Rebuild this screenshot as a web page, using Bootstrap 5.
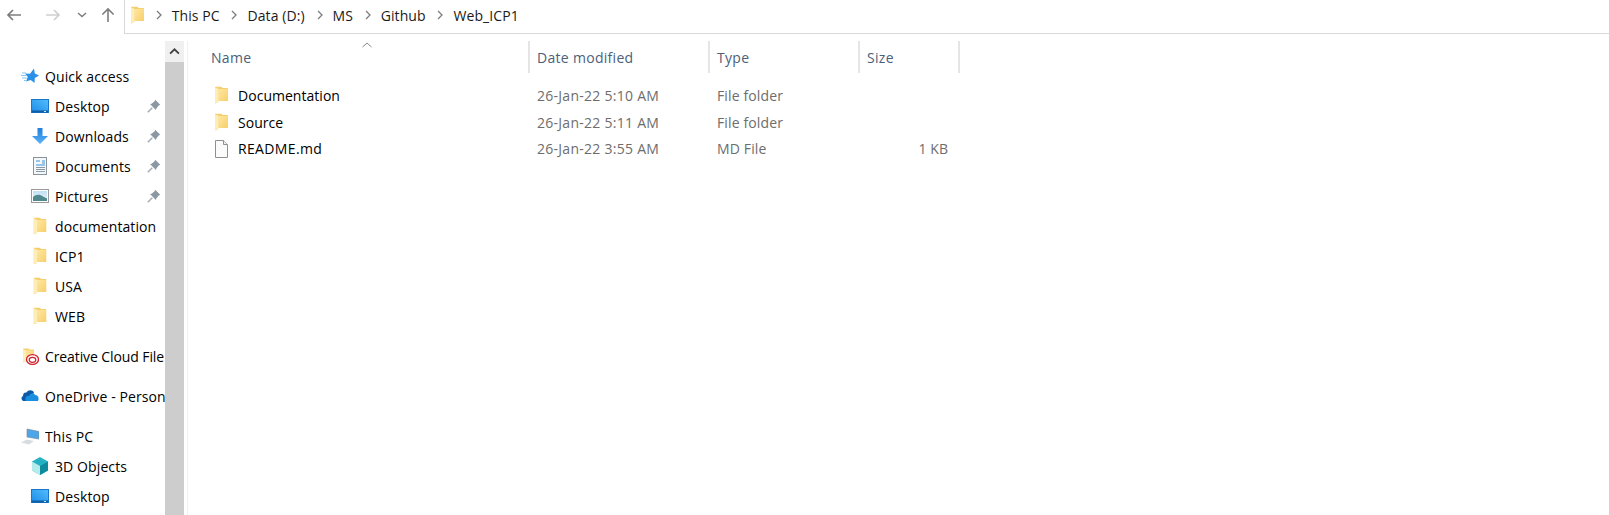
<!DOCTYPE html>
<html lang="en">
<head>
<meta charset="utf-8">
<title>Web_ICP1</title>
<link href="https://cdn.jsdelivr.net/npm/bootstrap@5.3.0/dist/css/bootstrap.min.css" rel="stylesheet">
<style>
html,body{height:515px;overflow:hidden;background:#fff}
body{font-family:"Open Sans","Noto Sans","Liberation Sans",sans-serif;font-size:14px;color:#000;letter-spacing:.03px}
.ex-top{height:34px}
.ex-nav{width:124px;padding-left:6px;padding-bottom:5px;flex:none}
.ex-addr{flex:1;height:34px;border-left:1px solid #d9d9d9;border-bottom:1px solid #d9d9d9;padding-left:6px;padding-bottom:3px;color:#1a1a1a;letter-spacing:.1px}
.ex-addr span{white-space:nowrap}
.ex-sep{margin:0 10px 0 11.7px;flex:none}
.ex-main{height:481px}
.ex-side{width:165px;flex:none;overflow:hidden;padding-top:27px}
.ex-row{height:30px;white-space:nowrap;overflow:hidden}
.ex-l1{padding-left:21px}
.ex-l2{padding-left:31px}
.ex-gap{height:10px}
.ex-ico{width:18px;height:18px;flex:none;margin-right:6px}
.ex-pin{margin-left:auto;margin-right:4px;flex:none}
.ex-label{overflow:hidden;letter-spacing:.1px}
.ex-tight{letter-spacing:-.1px}
.ex-bar{width:19px;background:#cdcdcd;flex:none;margin-top:7px}
.ex-btn{height:21px;background:#f0f0f0}
.ex-edge{width:1px;background:#f0f0f0;margin:7px 0 0 3px;flex:none}
.ex-list{flex:1;padding-left:15px;position:relative}
.ex-sort{position:absolute;left:174px;top:8px}
.ex-head{height:32px;margin-top:7px;color:#4c607a;margin-bottom:9px;letter-spacing:.3px}
.ex-head>div{height:32px;border-right:2px solid #e5e5e5;padding-left:7px;display:flex;align-items:center}
.ex-head>.c1{padding-left:8px}
.c1{width:327px;flex:none}
.c2{width:180px;flex:none}
.c3{width:150px;flex:none}
.c4{width:100px;flex:none}
.ex-file{height:26.7px;color:#6d6d6d}
.ex-file>div{padding-left:7px}
.ex-file>.c1{color:#000;padding-left:12px;display:flex;align-items:center}
.ex-file>.c2{letter-spacing:.27px}
.ex-file>.c3{letter-spacing:.13px}
.ex-file .ex-ico{margin-right:10px;width:13px;height:18px}
.ex-file .c4{text-align:right;padding-right:12px}
.ex-wide{letter-spacing:.35px}
</style>
</head>
<body>
<svg width="0" height="0" class="position-absolute">
<defs>
<linearGradient id="fg" x1="0" y1="0" x2="1" y2="1"><stop offset="0" stop-color="#ffe7a0"/><stop offset="1" stop-color="#f6cf6c"/></linearGradient>
<linearGradient id="dl" x1="0" y1="0" x2="0" y2="1"><stop offset="0" stop-color="#1f7fdc"/><stop offset="1" stop-color="#5ab2f6"/></linearGradient>
<linearGradient id="dk" x1="0" y1="1" x2="1" y2="0"><stop offset="0" stop-color="#1d8ce8"/><stop offset="1" stop-color="#53bdfb"/></linearGradient>
<linearGradient id="sky" x1="0" y1="0" x2="0" y2="1"><stop offset="0" stop-color="#bfe0f5"/><stop offset="1" stop-color="#eef6fb"/></linearGradient>
<symbol id="folder" viewBox="0 0 13 18"><path d="M0 .8H6.500L7.500 2H12.800V15H3V16.200L0 17.500Z" fill="#f5cf6e"/><path d="M3.500 3H12.800V15H3.500Z" fill="url(#fg)"/><path d="M0 1.200 3.500 3V15.800L0 17.500Z" fill="#fdeeb9"/></symbol>
<symbol id="pin" viewBox="0 0 14 14"><path d="M8.200 .8 13.200 5.800 11.700 6.400 9.300 9.400 9 11 3 5 4.600 4.700 7.600 2.300Z" fill="#8b97a3"/><path d="M5.300 8.700 .8 13.200" stroke="#a5adb5" stroke-width="1.500"/></symbol>
<symbol id="desk" viewBox="0 0 18 14"><rect x=".5" y=".5" width="17" height="13" fill="url(#dk)" stroke="#1976c9"/><rect x="1" y="11.500" width="16" height="2" fill="#0e5da8"/><rect x="13" y="12" width="2" height="1" fill="#cfe8fb"/></symbol>
<symbol id="chev" viewBox="0 0 6 10"><path d="M1 1l4 4-4 4" fill="none" stroke="#7d7d7d" stroke-width="1.300"/></symbol>
</defs>
</svg>
<div class="ex-top d-flex">
  <div class="ex-nav d-flex align-items-center">
    <svg width="16" height="16" viewBox="0 0 16 16"><path d="M15 8H2M7 3 2 8l5 5" fill="none" stroke="#7d7d7d" stroke-width="1.700"/></svg>
    <svg width="16" height="16" viewBox="0 0 16 16" style="margin-left:23px"><path d="M1 8h13M9 3l5 5-5 5" fill="none" stroke="#cfcfcf" stroke-width="1.700"/></svg>
    <svg width="10" height="6" viewBox="0 0 9 6" style="margin-left:16px"><path d="M.5 1 4.500 4.500 8.500 1" fill="none" stroke="#7d7d7d" stroke-width="1.500"/></svg>
    <svg width="14" height="16" viewBox="0 0 15 17" style="margin-left:14px"><path d="M7.500 16V2M1.500 8l6-6 6 6" fill="none" stroke="#7d7d7d" stroke-width="1.700"/></svg>
  </div>
  <div class="ex-addr d-flex align-items-center">
    <svg width="13" height="18"><use href="#folder"/></svg>
    <svg class="ex-sep" width="6" height="10"><use href="#chev"/></svg><span>This PC</span>
    <svg class="ex-sep" width="6" height="10"><use href="#chev"/></svg><span>Data (D:)</span>
    <svg class="ex-sep" width="6" height="10"><use href="#chev"/></svg><span>MS</span>
    <svg class="ex-sep" width="6" height="10"><use href="#chev"/></svg><span>Github</span>
    <svg class="ex-sep" width="6" height="10"><use href="#chev"/></svg><span>Web_ICP1</span>
  </div>
</div>
<div class="ex-main d-flex">
  <div class="ex-side">
    <div class="ex-row ex-l1 d-flex align-items-center"><svg class="ex-ico" viewBox="0 0 18 18"><path d="M13 1.500 13.800 6.500 18 8.500 13.800 11 13.500 16 9.700 13 5 14.500 6.800 10 4 6.500 9 6.800Z" fill="#2a8fe6"/><path d="M1 6h4M0 8.500h5M1 11h5M3 13.500h3" stroke="#86c6f4"/></svg><span class="ex-label">Quick access</span></div>
    <div class="ex-row ex-l2 d-flex align-items-center"><svg class="ex-ico" viewBox="0 0 18 14"><use href="#desk"/></svg><span class="ex-label">Desktop</span><svg class="ex-pin" width="14" height="14"><use href="#pin"/></svg></div>
    <div class="ex-row ex-l2 d-flex align-items-center"><svg class="ex-ico" viewBox="0 0 18 18"><path d="M6.500 1h5v8H17l-8 8-8-8h5.500Z" fill="url(#dl)"/></svg><span class="ex-label">Downloads</span><svg class="ex-pin" width="14" height="14"><use href="#pin"/></svg></div>
    <div class="ex-row ex-l2 d-flex align-items-center"><svg class="ex-ico" viewBox="0 0 18 18"><rect x="2.500" y=".5" width="13" height="17" fill="#f4f7fa" stroke="#8b949c"/><path d="M5 4h4M11 4h3M11 6h3M5 8h9" stroke="#3f93d8"/><path d="M5 10.500h9M5 12.500h9M5 14.500h9" stroke="#8a97a3"/></svg><span class="ex-label">Documents</span><svg class="ex-pin" width="14" height="14"><use href="#pin"/></svg></div>
    <div class="ex-row ex-l2 d-flex align-items-center"><svg class="ex-ico" viewBox="0 0 18 14"><rect x=".5" y=".5" width="17" height="13" fill="#fff" stroke="#9a9a9a"/><rect x="2" y="2" width="14" height="10" fill="url(#sky)"/><path d="M2 8C5 5 9 5 12 7.500L16 9.500V12H2Z" fill="#4f8a8f"/></svg><span class="ex-label">Pictures</span><svg class="ex-pin" width="14" height="14"><use href="#pin"/></svg></div>
    <div class="ex-row ex-l2 d-flex align-items-center"><svg class="ex-ico" viewBox="-2.500 0 18 18"><use href="#folder" width="13" height="18"/></svg><span class="ex-label">documentation</span></div>
    <div class="ex-row ex-l2 d-flex align-items-center"><svg class="ex-ico" viewBox="-2.500 0 18 18"><use href="#folder" width="13" height="18"/></svg><span class="ex-label">ICP1</span></div>
    <div class="ex-row ex-l2 d-flex align-items-center"><svg class="ex-ico" viewBox="-2.500 0 18 18"><use href="#folder" width="13" height="18"/></svg><span class="ex-label">USA</span></div>
    <div class="ex-row ex-l2 d-flex align-items-center"><svg class="ex-ico" viewBox="-2.500 0 18 18"><use href="#folder" width="13" height="18"/></svg><span class="ex-label">WEB</span></div>
    <div class="ex-gap"></div>
    <div class="ex-row ex-l1 d-flex align-items-center"><svg class="ex-ico" viewBox="0 0 18 18"><use href="#folder" x="2" width="11" height="17"/><ellipse cx="11.500" cy="12.500" rx="6" ry="4.800" fill="#fff" stroke="#d3202a" stroke-width="1.300"/><ellipse cx="11.500" cy="12.800" rx="3.300" ry="2.500" fill="none" stroke="#d3202a" stroke-width="1.200"/></svg><span class="ex-label ex-tight">Creative Cloud File</span></div>
    <div class="ex-gap"></div>
    <div class="ex-row ex-l1 d-flex align-items-center"><svg class="ex-ico" viewBox="0 0 18 18"><path d="M2 9C2 6 4 5 5.500 5.500 7 2.500 11.500 2.500 13 5.500L10 10 5 14H2.500C.5 14-.5 10 2 9Z" fill="#0a5aa8"/><path d="M5 14C3 11 6 8 8 9 9 6 13 5 14 8 17 8 18.500 10.500 17 14Z" fill="#1a8fe0"/></svg><span class="ex-label">OneDrive - Person</span></div>
    <div class="ex-gap"></div>
    <div class="ex-row ex-l1 d-flex align-items-center"><svg class="ex-ico" viewBox="0 0 18 18"><path d="M6 2l12 2.500v7.500L6 10Z" fill="#4ea6ea" stroke="#7d8c99" stroke-width=".7"/><path d="M0 15.500l6-3 7 1.500-5 3.500Z" fill="#d7dcdf"/></svg><span class="ex-label">This PC</span></div>
    <div class="ex-row ex-l2 d-flex align-items-center"><svg class="ex-ico" viewBox="0 0 18 18"><path d="M9 0l8 4.500v9L9 18l-8-4.500v-9Z" fill="#27b2c4"/><path d="M1 4.500l8 4.500v9l-8-4.500Z" fill="#b4ecec"/><path d="M9 9l8-4.500v9L9 18Z" fill="#0f8ba0"/></svg><span class="ex-label">3D Objects</span></div>
    <div class="ex-row ex-l2 d-flex align-items-center"><svg class="ex-ico" viewBox="0 0 18 14"><use href="#desk"/></svg><span class="ex-label">Desktop</span></div>
  </div>
  <div class="ex-bar d-flex flex-column">
    <div class="ex-btn d-flex align-items-center justify-content-center"><svg width="11" height="7" viewBox="0 0 10 6"><path d="M1 5l4-4 4 4" fill="none" stroke="#404040" stroke-width="1.600"/></svg></div>
  </div>
  <div class="ex-edge"></div>
  <div class="ex-list">
    <svg class="ex-sort" width="10" height="6" viewBox="0 0 10 6"><path d="M.5 5 5 1l4.500 4" fill="none" stroke="#8a8a8a"/></svg>
    <div class="ex-head d-flex">
      <div class="c1">Name</div><div class="c2">Date modified</div><div class="c3">Type</div><div class="c4">Size</div>
    </div>
    <div class="ex-file d-flex align-items-center"><div class="c1"><svg class="ex-ico"><use href="#folder"/></svg>Documentation</div><div class="c2">26-Jan-22 5:10 AM</div><div class="c3">File folder</div></div>
    <div class="ex-file d-flex align-items-center"><div class="c1"><svg class="ex-ico"><use href="#folder"/></svg>Source</div><div class="c2">26-Jan-22 5:11 AM</div><div class="c3">File folder</div></div>
    <div class="ex-file d-flex align-items-center"><div class="c1"><svg class="ex-ico" viewBox="0 0 13 18"><path d="M.5.5h8l4 4v13H.5Z" fill="#fbfbfb" stroke="#8f8f8f"/><path d="M8.500.5v4h4" fill="#eee" stroke="#8f8f8f"/></svg><span class="ex-wide">README.md</span></div><div class="c2">26-Jan-22 3:55 AM</div><div class="c3">MD File</div><div class="c4">1 KB</div></div>
  </div>
</div>
<script src="https://cdn.jsdelivr.net/npm/bootstrap@5.3.0/dist/js/bootstrap.bundle.min.js"></script>
</body>
</html>
